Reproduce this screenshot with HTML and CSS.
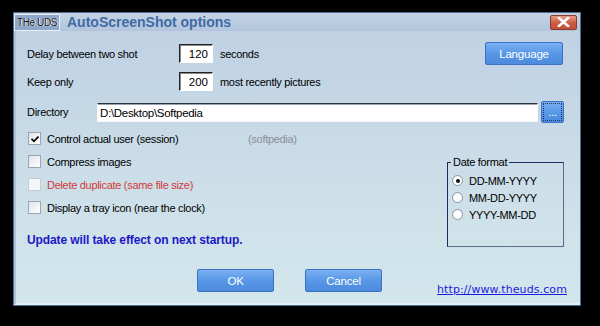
FILE: index.html
```html
<!DOCTYPE html>
<html lang="en">
<head>
    <meta charset="UTF-8">
    <title>AutoScreenShot options</title>
    <link rel="stylesheet" href="styles.css">
</head>
<body>
    <div class="window">
        <div class="titlebar">
            <div class="logo">THe UDS</div>
            <div class="title">AutoScreenShot options</div>
            <div class="close">
                <svg width="13" height="10" viewBox="0 0 13 10">
                    <path d="M2 1 L11 9 M11 1 L2 9" stroke="#fff" stroke-width="2.6" stroke-linecap="square"/>
                </svg>
            </div>
        </div>

        <div class="client">
            <div class="row row-delay">
                <span class="label">Delay between two shot</span>
                <span class="num-box">120</span>
                <span class="unit">seconds</span>
                <button class="btn btn-lang">Language</button>
            </div>

            <div class="row row-keep">
                <span class="label">Keep only</span>
                <span class="num-box">200</span>
                <span class="unit">most recently pictures</span>
            </div>

            <div class="row row-dir">
                <span class="label label-dir">Directory</span>
                <span class="text-box">D:\Desktop\Softpedia</span>
                <button class="btn btn-browse">...</button>
            </div>

            <div class="options">
                <div class="checks">
                    <div class="check-row">
                        <span class="box checked">
                            <svg width="8" height="8" viewBox="0 0 8 8"><path d="M0.5 3.8 L3 6.3 L7.5 1.5" stroke="#000" stroke-width="1.8" fill="none"/></svg>
                        </span>
                        <span class="check-text wide">Control actual user (session)</span>
                        <span class="muted">(softpedia)</span>
                    </div>
                    <div class="check-row">
                        <span class="box"></span>
                        <span class="check-text">Compress images</span>
                    </div>
                    <div class="check-row">
                        <span class="box disabled"></span>
                        <span class="check-text red">Delete duplicate (same file size)</span>
                    </div>
                    <div class="check-row">
                        <span class="box"></span>
                        <span class="check-text">Display a tray icon (near the clock)</span>
                    </div>
                    <p class="notice">Update will take effect on next startup.</p>
                </div>

                <fieldset class="date-group">
                    <legend>Date format</legend>
                    <div class="radio-row"><span class="radio on"></span>DD-MM-YYYY</div>
                    <div class="radio-row"><span class="radio"></span>MM-DD-YYYY</div>
                    <div class="radio-row"><span class="radio"></span>YYYY-MM-DD</div>
                </fieldset>
            </div>

            <div class="footer">
                <button class="btn btn-ok">OK</button>
                <button class="btn btn-cancel">Cancel</button>
                <a class="site-link" href="#">http://www.theuds.com</a>
            </div>
        </div>
    </div>
</body>
</html>
```

FILE: styles.css
```css
body {
    margin: 0;
    width: 600px;
    height: 326px;
    overflow: hidden;
    background: #000;
    font-family: "Liberation Sans", Arial, sans-serif;
    font-size: 11px;
    letter-spacing: -0.3px;
    color: #000;
}

.window {
    margin: 12px 0 0 13px;
    width: 566px;
    height: 292px;
    border: 1px solid #4d6d93;
    display: flex;
    flex-direction: column;
    background: #c4d6e6;
}

.titlebar {
    height: 18px;
    display: flex;
    align-items: center;
    background: linear-gradient(#c3d3e4, #b2c5dc);
}

.logo {
    width: 44px;
    height: 15px;
    border: 1px solid #e8eef6;
    background: #8ea8cc;
    color: #111;
    font-size: 10px;
    letter-spacing: -0.4px;
    line-height: 15px;
    white-space: nowrap;
    overflow: hidden;
    text-align: center;
    text-shadow: 0 0 1px #fff, 1px 0 0 #dfe8f4;
}

.title {
    margin-left: 7px;
    font-size: 14px;
    font-weight: bold;
    letter-spacing: 0;
    color: #3f6aa4;
}

.close {
    margin-left: auto;
    margin-right: 3px;
    width: 25px;
    height: 13px;
    border: 1px solid #8a3a2c;
    border-radius: 2px;
    background: linear-gradient(#e89a86, #cc5a44 55%, #c2503c);
    display: flex;
    align-items: center;
    justify-content: center;
}

.client {
    flex: 1;
    border-left: 2px solid #aec2d8;
    border-bottom: 2px solid #e6eef4;
    padding: 11px 16px 0 11px;
    background: linear-gradient(#bfd1e3, #cfe2ea 70%, #d2e6ec);
    display: flex;
    flex-direction: column;
}

.row {
    display: flex;
    align-items: center;
}

.row-delay {
    height: 23px;
}

.row-keep {
    height: 19px;
    margin-top: 7px;
}

.row-dir {
    height: 22px;
    margin-top: 10px;
}

.label {
    width: 152px;
    flex-shrink: 0;
}

.label-dir {
    width: 70px;
}

.num-box {
    width: 28px;
    height: 17px;
    line-height: 18px;
    padding-right: 4px;
    text-align: right;
    font-size: 11.5px;
    letter-spacing: 0;
    background: #fff;
    border: 1px solid #fff;
    border-top-color: #222;
    border-left-color: #222;
    box-shadow: inset 1px 1px 0 #8a8a8a;
}

.unit {
    margin-left: 7px;
}

.text-box {
    flex: 1;
    height: 17px;
    line-height: 18px;
    padding-left: 2px;
    font-size: 11.5px;
    background: #fff;
    border: 1px solid #f4f8fb;
    border-top: 1px solid #2c3440;
    box-shadow: inset 0 1px 0 #9aa4b0;
}

.btn {
    font-family: "Liberation Sans", Arial, sans-serif;
    font-size: 11.5px;
    letter-spacing: -0.2px;
    color: #fff;
    border: 1px solid #3b70c4;
    border-radius: 2px;
    background: linear-gradient(#7cb0f2, #5898e6 50%, #4c8ade);
    padding: 0;
}

.btn-lang {
    margin-left: auto;
    margin-right: 1px;
    width: 78px;
    height: 23px;
}

.btn-browse {
    margin-left: 3px;
    width: 23px;
    height: 22px;
    line-height: 10px;
    outline: 1px dotted #203860;
    outline-offset: -3px;
}

.options {
    margin-top: 4px;
    display: flex;
    justify-content: space-between;
}

.check-row {
    height: 23px;
    display: flex;
    align-items: center;
}

.box {
    width: 11px;
    height: 11px;
    margin-left: 1px;
    border: 1px solid #9ca6b2;
    background: linear-gradient(135deg, #dfe3e8, #fff);
    display: flex;
    align-items: center;
    justify-content: center;
}

.box.disabled {
    border-color: #c4ccd6;
    background: #f4f6f8;
}

.check-text {
    margin-left: 6px;
}

.check-text.wide {
    width: 201px;
}

.red {
    color: #d23a3a;
}

.muted {
    color: #8a8e98;
}

.notice {
    margin: 14px 0 0;
    line-height: 14px;
    font-size: 12px;
    font-weight: bold;
    letter-spacing: -0.1px;
    color: #1c18c8;
}

.date-group {
    margin: 29px 0 0;
    padding: 3px 0 4px 0;
    width: 115px;
    border: 1px solid #5a6c8a;
    border-top-color: #1c2c5c;
    border-left-color: #1c2c5c;
}

.date-group legend {
    margin-left: 3px;
    padding: 0 2px;
    line-height: 13px;
}

.radio-row {
    height: 17px;
    display: flex;
    align-items: center;
    margin-left: 4px;
}

.radio {
    width: 9px;
    height: 9px;
    margin-right: 6px;
    border-radius: 50%;
    border: 1px solid #8d97a3;
    background: radial-gradient(circle at 60% 60%, #fff 55%, #d8dde2);
    position: relative;
}

.radio.on::after {
    content: "";
    position: absolute;
    left: 2.5px;
    top: 2.5px;
    width: 4px;
    height: 4px;
    border-radius: 50%;
    background: #111;
}

.footer {
    margin-top: 22px;
    display: flex;
    align-items: flex-start;
}

.btn-ok,
.btn-cancel {
    width: 77px;
    height: 23px;
}

.btn-ok {
    margin-left: 170px;
}

.btn-cancel {
    margin-left: 31px;
}

.site-link {
    margin: 14px -3px 0 auto;
    font-family: "DejaVu Sans", Verdana, sans-serif;
    font-size: 11px;
    letter-spacing: 0.1px;
    line-height: 13px;
    color: #1a1ae0;
}
```
